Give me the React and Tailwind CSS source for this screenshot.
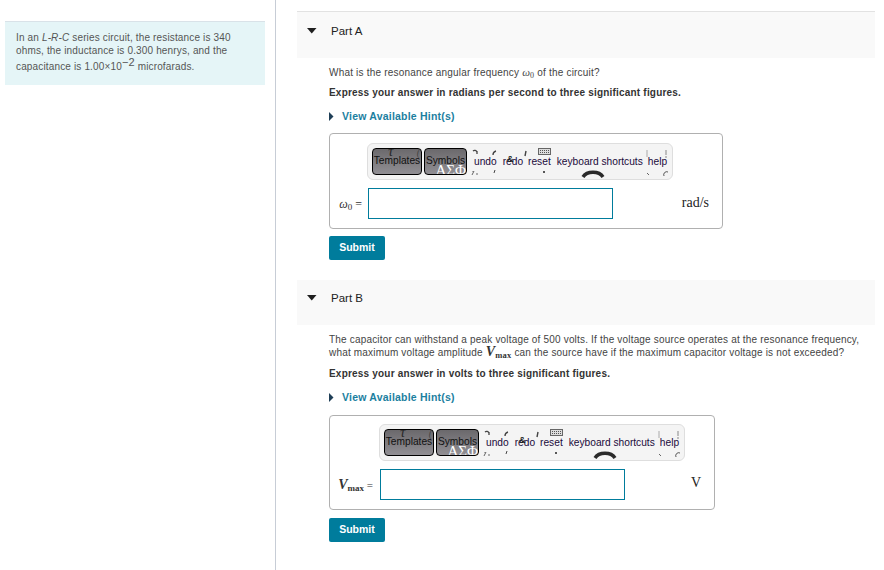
const sans = { fontFamily: '"Liberation Sans", Arial, sans-serif' };

const Toolbar = () => (
    <div className="relative flex h-[37px] w-[306px] items-start rounded-[6px] border border-[#dedede] bg-[#f4f4f4] text-[10.2px] leading-none text-[#1a0a3a]">
        {/* Templates / Symbols buttons */}
        <div className="relative ml-[4px] mt-[4px] flex h-[27px] w-[50px] items-center justify-center overflow-hidden rounded-[4px] border border-black bg-gradient-to-b from-[#6b696c] to-[#918f94] pb-[1px] text-[#111]">
            <span className="absolute left-[15px] top-[-5px] font-['Liberation_Serif'] text-[15px] italic text-[#2a2a2a]">τ</span>
            <span className="absolute right-[1px] top-[-1px] font-['Liberation_Serif'] text-[10px] italic text-[#444]">(</span>
            <span className="relative">Templates</span>
        </div>
        <div className="relative ml-[2px] mt-[4px] flex h-[27px] w-[43px] items-center justify-center overflow-hidden rounded-[4px] border border-black bg-gradient-to-b from-[#6b696c] to-[#918f94] pb-[1px] text-[#111]">
            <span className="absolute bottom-[-4px] right-[0px] whitespace-nowrap font-['Liberation_Serif'] text-[15px] text-white">ΑΣΦ</span>
            <span className="relative">Symbols</span>
        </div>
        <div className="flex h-full items-center pt-[1px]">
            <span className="ml-[7px]">undo</span>
            <span className="ml-[6px]">redo</span>
            <span className="ml-[5px]">reset</span>
            <span className="ml-[6px] whitespace-nowrap">keyboard shortcuts</span>
            <span className="ml-[5px]">help</span>
        </div>

        {/* clipped sprite fragments */}
        <svg className="pointer-events-none absolute left-0 top-0" width="306" height="37" fill="none" stroke="#444" strokeWidth="1">
            <path d="M105 7a2.500 2.500 0 0 1 4 1M109 7v3" strokeWidth="1.300" />
            <path d="M125 11a4 4 0 0 1 3-4" strokeWidth="1.300" />
            <path d="M158 7l-1 5" strokeWidth="1.400" />
            <rect x="170.500" y="4.500" width="12" height="6" fill="#ddd" stroke="#666" />
            <path d="M172 6.500h9M172 8.500h9" stroke="#555" strokeDasharray="1 1" />
            <path d="M106 27l-2 4M105 27v1M108 30h2" stroke="#666" />
            <path d="M127 26l-1 3" />
            <path d="M176 27v2M175 28h2" stroke="#222" />
            <path d="M215 33a11 8 0 0 1 20 0" stroke="#2a2a2a" strokeWidth="3.500" />
            <path d="M279 6v7" stroke="#aaa" />
            <path d="M298 6v5M298 12v2" stroke="#888" />
            <path d="M279 29l2 2" stroke="#666" />
            <path d="M296 32a3 3 0 0 1 4-4" stroke="#555" />
        </svg>
        <span className="absolute left-[139px] top-[11px] text-[9px] font-bold leading-none text-[#222]">&amp;</span>
    </div>
);

const PartHeader = ({ title, border }) => (
    <div className={`flex bg-[#f9f9f9] pl-[10px] ${border ? 'h-[47px] border-t border-[#e2e2e2] pt-[12px]' : 'h-[45px] pt-[11px]'}`}>
        <svg className="mt-[4px]" width="10" height="6" viewBox="0 0 10 6">
            <path d="M0 0h9.500L4.750 5.500z" fill="#1f1f1f" />
        </svg>
        <span className="ml-[14px] text-[11.500px] leading-[14px] text-[#222]">{title}</span>
    </div>
);

const Hint = () => (
    <div className="flex items-center text-[10.5px] font-bold leading-[14px] tracking-[0.02em] text-[#1c7f9f]">
        <svg width="5" height="9" viewBox="0 0 5 9">
            <path d="M0 0l4.500 4.500L0 9z" fill="#1f3f57" />
        </svg>
        <span className="ml-[8px]">View Available Hint(s)</span>
    </div>
);

const AnswerBox = ({ width, label, unit, labelWidth, unitClass }) => (
    <div className={`flex flex-col rounded-[4px] border border-[#b0b0b0] ${width}`}>
        <div className={labelWidth === 38 ? 'ml-[37px] mt-[9px]' : 'ml-[49px] mt-[8px]'}>
            <Toolbar />
        </div>
        <div className="mt-[8px] flex items-center">
            <div className={`flex items-center justify-end ${labelWidth === 38 ? 'w-[38px]' : 'w-[50px]'}`}>
                {label}
            </div>
            <div className="h-[31px] w-[245px] border border-[#007c9c] bg-white" />
            <div className={`flex-1 pr-[13px] text-right font-['Liberation_Serif'] text-[14px] text-[#222] ${unitClass}`}>{unit}</div>
        </div>
    </div>
);

const SubmitButton = () => (
    <button className="flex h-[24px] w-[56px] items-center justify-center rounded-[2px] bg-[#007c9c] text-[10.5px] font-bold text-white">
        Submit
    </button>
);

export default function App() {
    return (
        <div className="flex h-[570px] w-[884px] overflow-hidden bg-white" style={sans}>
            {/* Left column */}
            <div className="h-full w-[276px] shrink-0 border-r border-[#c7cdd6] pl-[5px] pt-[21px]">
                <div className="h-[64px] w-[260px] border-t border-[#d9e2e8] bg-[#e5f5f7] pl-[11px] pt-[9px] text-[10px] leading-[13px] tracking-[0.15px] text-[#555]">
                    In an <i>L-R-C</i> series circuit, the resistance is 340
                    <br />
                    ohms, the inductance is 0.300 henrys, and the
                    <br />
                    capacitance is 1.00×10
                    <sup className="static align-[4px] text-[11px] leading-[10px]">−2</sup> microfarads.
                </div>
            </div>

            {/* Right column */}
            <div className="ml-[21px] w-[578px] pt-[11px]">
                <PartHeader title="Part A" border />
                <div className="pl-[32px] pt-[8px]">
                    <p className="text-[10px] leading-[13px] tracking-[0.2px] text-[#444]">
                        What is the resonance angular frequency{' '}
                        <span className="font-['Liberation_Serif'] text-[11px] italic leading-[0]">ω<sub className="not-italic text-[8px]">0</sub></span> of the circuit?
                    </p>
                    <p className="mt-[7px] text-[10px] font-bold leading-[13px] tracking-[0.2px] text-[#333]">
                        Express your answer in radians per second to three significant figures.
                    </p>
                    <div className="mt-[10px]">
                        <Hint />
                    </div>
                    <div className="mt-[10px]">
                        <AnswerBox
                            width="w-[394px] h-[96px]"
                            labelWidth={38}
                            unit="rad/s"
                            unitClass="mb-[2px]"
                            label={
                                <span className="mr-[6px] font-['Liberation_Serif'] text-[12px] text-[#333]">
                                    <i>ω</i><sub className="text-[9px]">0</sub> =
                                </span>
                            }
                        />
                    </div>
                    <div className="mt-[7px]">
                        <SubmitButton />
                    </div>
                </div>

                <div className="mt-[20px]">
                    <PartHeader title="Part B" />
                    <div className="pl-[32px] pt-[8px]">
                        <p className="whitespace-nowrap text-[10px] leading-[13px] tracking-[0.18px] text-[#444]">
                            The capacitor can withstand a peak voltage of 500 volts. If the voltage source operates at the resonance frequency,
                            <br />
                            what maximum voltage amplitude{' '}
                            <span className="font-['Liberation_Serif'] text-[14px] font-bold italic leading-[0] text-[#333]">V<sub className="not-italic text-[8.500px]">max</sub></span> can the source have if the maximum capacitor voltage is not exceeded?
                        </p>
                        <p className="mt-[8px] text-[10px] font-bold leading-[13px] tracking-[0.2px] text-[#333]">
                            Express your answer in volts to three significant figures.
                        </p>
                        <div className="mt-[10px]">
                            <Hint />
                        </div>
                        <div className="mt-[11px]">
                            <AnswerBox
                                width="w-[386px] h-[95px]"
                                labelWidth={50}
                                unit="V"
                                unitClass="mb-[4px]"
                                label={
                                    <span className="mr-[7px] font-['Liberation_Serif'] text-[11px] text-[#333]">
                                        <b className="text-[14px] italic">V</b><sub className="font-bold text-[9px]">max</sub> =
                                    </span>
                                }
                            />
                        </div>
                        <div className="mt-[8px]">
                            <SubmitButton />
                        </div>
                    </div>
                </div>
            </div>
        </div>
    );
}
